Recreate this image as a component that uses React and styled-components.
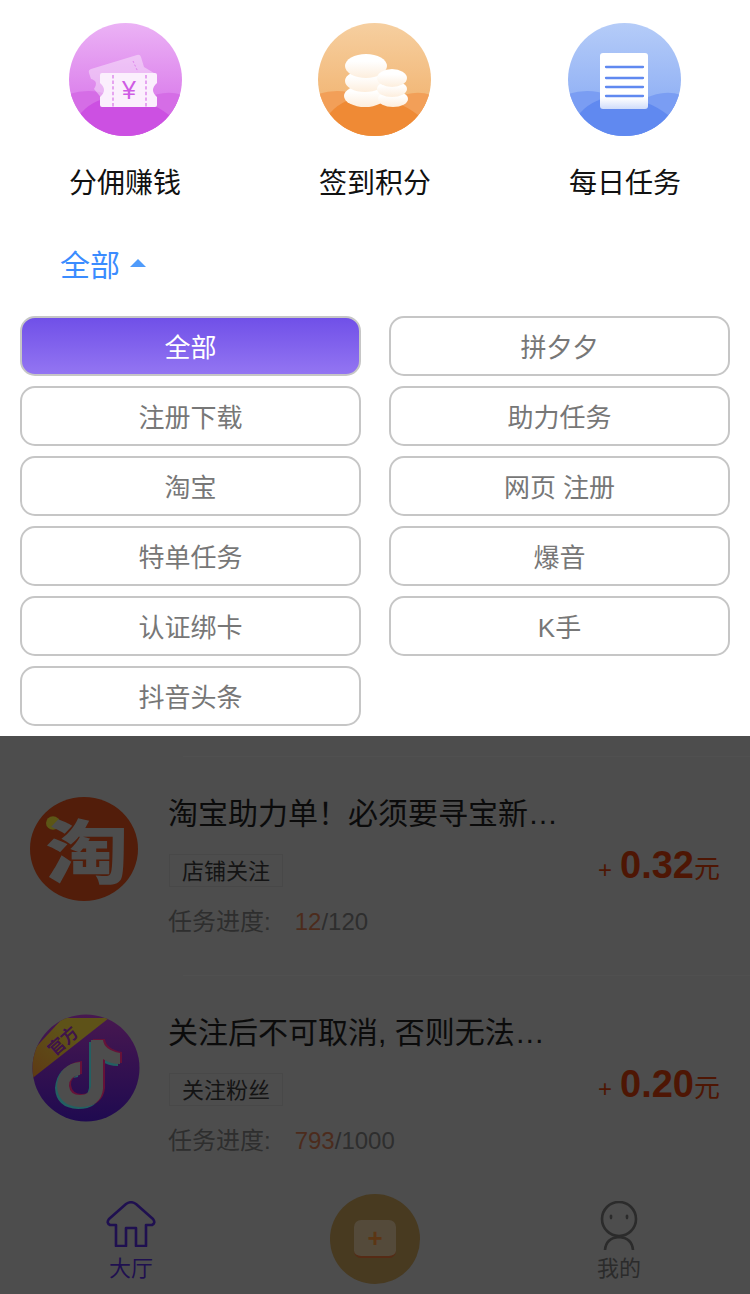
import React from "react";
import styled, { createGlobalStyle } from "styled-components";

const shortcuts = [
  { label: "分佣赚钱", kind: "ticket" },
  { label: "签到积分", kind: "coins" },
  { label: "每日任务", kind: "doc" },
];

const chips = ["全部", "拼夕夕", "注册下载", "助力任务", "淘宝", "网页 注册", "特单任务", "爆音", "认证绑卡", "K手", "抖音头条"];

const tasks = [
  { title: "淘宝助力单！必须要寻宝新…", tag: "店铺关注", done: 12, total: 120, price: "0.32", logo: "taobao" },
  { title: "关注后不可取消, 否则无法…", tag: "关注粉丝", done: 793, total: 1000, price: "0.20", logo: "douyin" },
];

const palettes = {
  ticket: ["#ebb2f5", "#dc82ec", "#d56de6", "#cc50e2"],
  coins: ["#f6cfa0", "#f2b878", "#f29f58", "#ef8a35"],
  doc: ["#b5ccf8", "#94b3f5", "#7a9df3", "#6089f0"],
};

const notePath =
  "M59 26 H71 Q72 36 88 39 V50 Q78 50 71 45 V75 Q69 93 48 93 Q26 92 25 72 Q27 50 48 48 V61 Q37 62 37 72 Q38 81 48 81 Q58 81 59 72 Z";

function TicketArt() {
  return (
    <g>
      <path d="M20 50 Q19 47 22 46 L68 32 Q71 31 72 34 L75 44 L85 50 L40 84 L25 66 Q30 58 22 56 Z" fill="#fff" opacity="0.4" />
      <path
        d="M31 52 Q31 50 33 50 L86 50 Q88 50 88 52 L88 60 Q80 67 88 74 L88 82 Q88 84 86 84 L33 84 Q31 84 31 82 L31 74 Q39 67 31 60 Z"
        fill="#fbeffd"
      />
      <path d="M44 52 V84 M77 52 V84" stroke="#d873e8" strokeWidth="1.2" strokeDasharray="3.4 2.2" />
      <path d="M64 38 L69 49" stroke="#d873e8" strokeWidth="0.8" strokeDasharray="2 2" />
      <text x="60" y="76" textAnchor="middle" fontSize="25" fill="#cf5ce4" fontFamily="Liberation Sans, sans-serif">¥</text>
    </g>
  );
}

function Coin({ cx, cy, rx, ry }) {
  return <ellipse cx={cx} cy={cy} rx={rx} ry={ry} fill="url(#coinFade)" />;
}

function CoinsArt() {
  return (
    <g>
      <defs>
        <linearGradient id="coinFade" x1="0" y1="0" x2="0" y2="1">
          <stop offset="0.3" stopColor="#fff" />
          <stop offset="1" stopColor="#fdeedd" />
        </linearGradient>
      </defs>
      <Coin cx={47} cy={73} rx={21} ry={11} />
      <Coin cx={47} cy={58} rx={20} ry={11} />
      <Coin cx={48} cy={43} rx={21} ry={12} />
      <Coin cx={75} cy={76} rx={15} ry={8} />
      <Coin cx={74} cy={66} rx={15} ry={8} />
      <Coin cx={74} cy={55} rx={15} ry={9} />
    </g>
  );
}

function DocArt() {
  return (
    <g>
      <defs>
        <linearGradient id="docFade" x1="0" y1="0" x2="0" y2="1">
          <stop offset="0.8" stopColor="#fff" />
          <stop offset="1" stopColor="#cfdcfa" />
        </linearGradient>
      </defs>
      <rect x="32" y="30" width="48" height="56" rx="3" fill="url(#docFade)" />
      <path d="M38 44 H75 M38 55 H75 M38 64 H75 M38 73 H75" stroke="#6089f0" strokeWidth="2.3" strokeLinecap="round" />
    </g>
  );
}

function RoundIcon({ kind }) {
  const [a, b, c, d] = palettes[kind];
  return (
    <IconSvg viewBox="0 0 113 113">
      <defs>
        <linearGradient id={`bg-${kind}`} x1="0" y1="0" x2="0" y2="1">
          <stop offset="0" stopColor={a} />
          <stop offset="0.65" stopColor={b} />
        </linearGradient>
        <clipPath id={`clip-${kind}`}>
          <circle cx="56.5" cy="56.5" r="56.5" />
        </clipPath>
      </defs>
      <g clipPath={`url(#clip-${kind})`}>
        <rect width="113" height="113" fill={`url(#bg-${kind})`} />
        <path d="M0 71 Q16 66 30 69 Q48 73 60 80 L113 80 V113 H0 Z" fill={c} />
        <path d="M76 76 Q96 66 113 72 V113 H70 Z" fill={c} />
        <path d="M12 90 Q26 74 50 74 Q78 75 100 92 L113 113 H0 Z" fill={d} />
      </g>
      {kind === "ticket" && <TicketArt />}
      {kind === "coins" && <CoinsArt />}
      {kind === "doc" && <DocArt />}
    </IconSvg>
  );
}

function TaobaoLogo() {
  return (
    <TaobaoSvg viewBox="0 0 108 108" preserveAspectRatio="none">
      <circle cx="54" cy="54" r="54" fill="#521d0a" />
      <circle cx="23" cy="27" r="7" fill="#5c5616" />
      <text
        transform="translate(57 0) scale(1.15 1)"
        y="84"
        textAnchor="middle"
        fontSize="72"
        fontWeight="900"
        fill="#4d4d4d"
        fontFamily="Noto Sans CJK SC, sans-serif"
      >
        淘
      </text>
    </TaobaoSvg>
  );
}

function DouyinLogo() {
  return (
    <DouyinSvg viewBox="0 0 108 108">
      <defs>
        <linearGradient id="dyBg" x1="0" y1="0" x2="0" y2="1">
          <stop offset="0" stopColor="#481850" />
          <stop offset="1" stopColor="#1f0a50" />
        </linearGradient>
        <linearGradient id="dyBand" x1="0" y1="1" x2="1" y2="0">
          <stop offset="0" stopColor="#5e3814" />
          <stop offset="0.6" stopColor="#5e5218" />
        </linearGradient>
        <clipPath id="dyClip">
          <circle cx="54" cy="54" r="53.5" />
        </clipPath>
      </defs>
      <circle cx="54" cy="54" r="53.5" fill="url(#dyBg)" />
      <path d="M-2 66 L77 4 L31 4 L6 31 L-2 40 Z" fill="url(#dyBand)" clipPath="url(#dyClip)" />
      <text transform="rotate(-42 31 27)" x="31" y="33" textAnchor="middle" fontSize="17" fontWeight="700" fill="#3f144a" fontFamily="Noto Sans CJK SC, sans-serif">官方</text>
      <path d={notePath} fill="#236062" transform="translate(-2 2)" />
      <path d={notePath} fill="#661238" transform="translate(2 -1)" />
      <path d={notePath} fill="#4d4d4d" />
    </DouyinSvg>
  );
}

function TaskRow({ task }) {
  return (
    <Row>
      <LogoCell $douyin={task.logo === "douyin"}>
        {task.logo === "taobao" ? <TaobaoLogo /> : <DouyinLogo />}
      </LogoCell>
      <RowBody>
        <RowTitle>{task.title}</RowTitle>
        <TagLine>
          <Tag>{task.tag}</Tag>
          <Price>
            <small>+</small>
            <strong>{task.price}</strong>
            <span>元</span>
          </Price>
        </TagLine>
        <Progress>
          任务进度:
          <Done>{task.done}</Done>/{task.total}
        </Progress>
      </RowBody>
    </Row>
  );
}

function App() {
  return (
    <Page>
      <GlobalStyle />
      <Sheet>
        <Shortcuts>
          {shortcuts.map((s) => (
            <Shortcut key={s.label}>
              <RoundIcon kind={s.kind} />
              <ShortcutLabel>{s.label}</ShortcutLabel>
            </Shortcut>
          ))}
        </Shortcuts>
        <FilterHead>
          全部
          <Caret />
        </FilterHead>
        <ChipGrid>
          {chips.map((c, i) => (
            <Chip key={c} $active={i === 0}>{c}</Chip>
          ))}
        </ChipGrid>
      </Sheet>
      <Dimmed>
        <TaskList>
          {tasks.map((t) => (
            <TaskRow key={t.tag} task={t} />
          ))}
        </TaskList>
        <TabBar>
          <TabItem $color="#1f1050">
            <TabIcon>
              <svg width="50" height="46" viewBox="0 0 50 46" fill="none" stroke="#1f1050" strokeWidth="2.6" strokeLinejoin="round">
                <path d="M10 45 V24 H4 Q0 22 3 18 L20 3 Q25 -0.5 30 3 L47 18 Q50 22 46 24 H40 V45 H30 V27 H20 V45 Z" />
              </svg>
            </TabIcon>
            <span>大厅</span>
          </TabItem>
          <CenterCell>
            <PublishButton>
              <PublishCard>+</PublishCard>
            </PublishButton>
          </CenterCell>
          <TabItem $color="#2b2b2b">
            <TabIcon>
              <svg width="40" height="50" viewBox="0 0 40 50" fill="none" stroke="#2b2b2b" strokeWidth="2.6">
                <circle cx="20" cy="18" r="17" />
                <ellipse cx="12" cy="16" rx="1.4" ry="2.4" fill="#2b2b2b" stroke="none" />
                <ellipse cx="28" cy="16" rx="1.4" ry="2.4" fill="#2b2b2b" stroke="none" />
                <path d="M6 49 Q7 37 20 36 Q33 37 34 49" />
              </svg>
            </TabIcon>
            <span>我的</span>
          </TabItem>
        </TabBar>
      </Dimmed>
    </Page>
  );
}

export default App;

const GlobalStyle = createGlobalStyle`
  html, body {
    margin: 0;
    padding: 0;
    background: #fff;
  }
  * {
    box-sizing: border-box;
  }
`;

const Page = styled.div`
  width: 750px;
  height: 1294px;
  display: flex;
  flex-direction: column;
  overflow: hidden;
  font-family: "Liberation Sans", "Noto Sans CJK SC", sans-serif;
`;

const Sheet = styled.div`
  height: 736px;
  background: #fff;
  padding-top: 23px;
`;

const Shortcuts = styled.div`
  display: grid;
  grid-template-columns: repeat(3, 250px);
`;

const IconSvg = styled.svg`
  width: 113px;
  height: 113px;
  display: block;
`;

const Shortcut = styled.div`
  display: flex;
  flex-direction: column;
  align-items: center;
  & + & ${IconSvg} {
    margin-right: 2px;
  }
`;

const ShortcutLabel = styled.div`
  margin-top: 28px;
  font-size: 28px;
  line-height: 40px;
  color: #111;
`;

const FilterHead = styled.div`
  margin-top: 39px;
  padding-left: 60px;
  display: flex;
  align-items: center;
  height: 40px;
  font-size: 30px;
  color: #3b8cff;
`;

const Caret = styled.i`
  margin-left: 10px;
  width: 0;
  height: 0;
  border-left: 8px solid transparent;
  border-right: 8px solid transparent;
  border-bottom: 8px solid #4f9bfb;
`;

const ChipGrid = styled.div`
  margin-top: 33px;
  padding: 0 20px;
  display: grid;
  grid-template-columns: 341px 341px;
  column-gap: 28px;
  row-gap: 10px;
`;

const Chip = styled.div`
  height: 60px;
  padding-bottom: 2px;
  display: flex;
  align-items: center;
  justify-content: center;
  border: 2px solid #c6c6c6;
  border-radius: 15px;
  font-size: 26px;
  color: ${(p) => (p.$active ? "#fff" : "#777")};
  background: ${(p) => (p.$active ? "linear-gradient(180deg, #7050e8, #9375f2)" : "#fff")};
`;

const Dimmed = styled.div`
  flex: 1;
  display: flex;
  flex-direction: column;
  background: #4d4d4d;
`;

const TaskList = styled.div`
  height: 458px;
  padding-top: 20px;
`;

const Row = styled.div`
  height: 219px;
  display: flex;
  padding-left: 30px;
`;

const LogoCell = styled.div`
  width: 139px;
  flex-shrink: 0;
  padding: ${(p) => (p.$douyin ? "39px 0 0 2px" : "41px 0 0")};
`;

const TaobaoSvg = styled.svg`
  display: block;
  width: 108px;
  height: 104px;
`;

const DouyinSvg = styled.svg`
  display: block;
  width: 108px;
  height: 108px;
`;

const RowBody = styled.div`
  flex: 1;
  padding: 37px 30px 0 0;
  background: linear-gradient(#505050, #505050) 14px 0 / 100% 1px no-repeat;
`;

const RowTitle = styled.div`
  margin-left: -1px;
  font-size: 30px;
  line-height: 42px;
  color: #0b0b0b;
  white-space: nowrap;
`;

const TagLine = styled.div`
  margin-top: 19px;
  height: 33px;
  display: flex;
  align-items: center;
  justify-content: space-between;
`;

const Tag = styled.div`
  height: 33px;
  padding: 0 12px 3px;
  display: flex;
  align-items: center;
  border: 1px solid #484848;
  font-size: 22px;
  color: #141414;
`;

const Price = styled.div`
  display: flex;
  align-items: baseline;
  padding-bottom: 10px;
  color: #4e1604;
  small {
    font-size: 24px;
    margin-right: 8px;
  }
  strong {
    font-size: 38px;
    font-weight: 700;
  }
  span {
    font-size: 26px;
  }
`;

const Progress = styled.div`
  margin-top: 18px;
  margin-left: -1px;
  font-size: 24px;
  line-height: 34px;
  color: #2e2e2e;
`;

const Done = styled.span`
  margin-left: 24px;
  color: #4c2b1c;
`;

const TabBar = styled.div`
  flex: 1;
  display: grid;
  grid-template-columns: 262px 226px 262px;
`;

const TabItem = styled.div`
  display: flex;
  flex-direction: column;
  align-items: center;
  padding-top: 7px;
  color: ${(p) => p.$color};
  font-size: 22px;
  span {
    line-height: 30px;
    margin-top: 3px;
  }
`;

const TabIcon = styled.div`
  height: 50px;
`;

const CenterCell = styled.div`
  display: flex;
  justify-content: center;
`;

const PublishButton = styled.div`
  width: 90px;
  height: 90px;
  border-radius: 50%;
  background: #483a20;
  display: flex;
  align-items: center;
  justify-content: center;
`;

const PublishCard = styled.div`
  width: 42px;
  height: 38px;
  border-radius: 7px;
  background: #544a3a;
  border-bottom: 2px solid #562b15;
  display: flex;
  align-items: center;
  justify-content: center;
  color: #5c3614;
  font-size: 26px;
  font-weight: 700;
`;
